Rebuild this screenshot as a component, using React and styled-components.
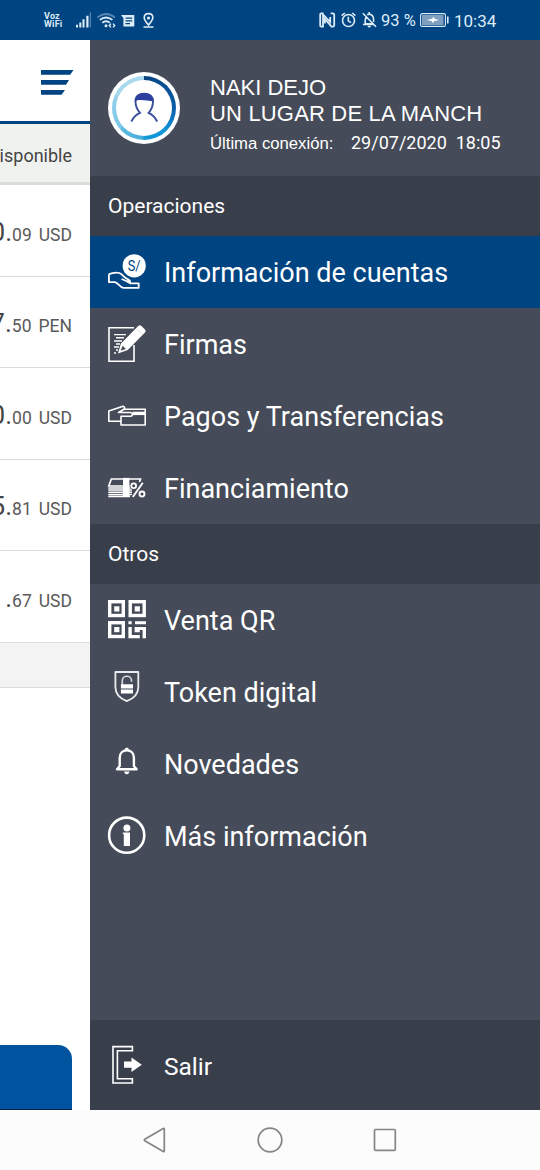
import React from "react";
import styled, { createGlobalStyle } from "styled-components";

const GlobalStyle = createGlobalStyle`
  *, *::before, *::after { box-sizing: border-box; }
  html, body { margin: 0; padding: 0; }
  body { font-family: Roboto, sans-serif; background: #fff; overflow: hidden; }
  svg { display: block; overflow: visible; flex: none; }
`;

const Screen = styled.div`
  width: 540px;
  height: 1170px;
  display: flex;
  flex-direction: column;
  overflow: hidden;
`;

const StatusBar = styled.header`
  flex: none;
  height: 40px;
  padding: 0 45px 0 44px;
  display: flex;
  align-items: center;
  justify-content: space-between;
  background: #004481;
  color: #dcecf8;
`;

const StatusGroup = styled.div`
  display: flex;
  align-items: center;
`;

const Carrier = styled.div`
  width: 32px;
  font-size: 9px;
  line-height: 8px;
  font-weight: 700;
  letter-spacing: 0.2px;
`;

const StatusText = styled.span`
  font-size: ${(p) => p.$size}px;
  line-height: 20px;
  width: ${(p) => p.$width}px;
  margin-left: ${(p) => p.$gap}px;
  white-space: nowrap;
  padding-top: 1px;
`;

const Main = styled.main`
  flex: none;
  height: 1070px;
  display: flex;
`;

const Accounts = styled.section`
  flex: none;
  width: 90px;
  overflow: hidden;
  display: flex;
  flex-direction: column;
  background: #fff;
`;

const AccountsHeader = styled.div`
  flex: none;
  height: 84px;
  padding: 30px 0 0 41px;
  border-bottom: 3px solid #004481;
`;

const ColumnTitle = styled.div`
  flex: none;
  height: 61px;
  padding: 4px 18px 0 0;
  display: flex;
  align-items: center;
  justify-content: flex-end;
  background: #f0f2f0;
  border-bottom: 3px solid #dadcdc;
  color: #444;
  font-size: 18px;
  white-space: nowrap;
`;

const Balance = styled.div`
  flex: none;
  height: 91.5px;
  padding: 3px 18px 0 0;
  display: flex;
  align-items: center;
  justify-content: flex-end;
  border-bottom: 1px solid #dcdcdc;
  color: #5a5a5a;
  font-size: 17.5px;
  white-space: nowrap;
`;

const Whole = styled.span`
  font-size: 26px;
  line-height: 30px;
  color: #444;
`;

const Amount = styled.div`
  display: flex;
  align-items: baseline;
`;

const Currency = styled.span`
  margin-left: 7px;
`;

const ListEnd = styled.div`
  flex: none;
  height: 45px;
  background: #f3f3f3;
  border-bottom: 1px solid #dadada;
`;

const ActionButton = styled.div`
  width: 72px;
  height: 65px;
  margin-top: auto;
  background: #00549f;
  border-bottom: 1px solid #072146;
  border-top-right-radius: 14px;
`;

const Drawer = styled.aside`
  flex: 1;
  display: flex;
  flex-direction: column;
  background: #454b58;
  color: #fff;
`;

const Profile = styled.div`
  flex: none;
  height: 136px;
  padding: 32px 0 0 18px;
  display: flex;
`;

const Avatar = styled.div`
  flex: none;
  width: 72px;
  height: 72px;
  border-radius: 50%;
  background: #fff;
  padding: 4px;
`;

const Ring = styled.div`
  width: 64px;
  height: 64px;
  border-radius: 50%;
  padding: 4px;
  background: conic-gradient(#07427f 0deg, #0b5ca8 85deg, #0b72bd 110deg, #1295d6 135deg, #0f98d8 178deg, #4aafdc 184deg, #5cb9e0 225deg, #7cc8e8 230deg, #8acde9 280deg, #a9d9ec 300deg, #a9d9ec 358deg);
`;

const Face = styled.div`
  width: 56px;
  height: 56px;
  border-radius: 50%;
  background: #fff;
`;

const ProfileText = styled.div`
  margin-left: 30px;
  padding-top: 3px;
  font-family: "Liberation Sans", Arial, sans-serif;
`;

const Name = styled.div`
  font-size: 22px;
  line-height: 26px;
  letter-spacing: ${(p) => p.$spacing}px;
  white-space: nowrap;
`;

const LastLogin = styled.div`
  display: flex;
  align-items: baseline;
  margin-top: 4px;
  font-size: 16.7px;
  line-height: 24px;
  white-space: nowrap;
`;

const LoginLabel = styled.span`
  width: 141px;
`;

const LoginDate = styled.span`
  font-family: Roboto, sans-serif;
  font-size: 18px;
  white-space: pre;
`;

const SectionTitle = styled.div`
  flex: none;
  height: 60px;
  padding-left: 18px;
  display: flex;
  align-items: center;
  background: #393e4b;
  font-size: 21px;
`;

const MenuItem = styled.div`
  flex: none;
  height: 72px;
  padding-left: 18px;
  display: flex;
  align-items: center;
  background: ${(p) => (p.$active ? "#004481" : "transparent")};
`;

const MenuLabel = styled.span`
  margin-left: 18px;
  padding-top: 2px;
  font-size: ${(p) => p.$size || 27}px;
  white-space: nowrap;
`;

const Logout = styled.div`
  flex: none;
  height: 90px;
  margin-top: auto;
  padding: 1px 0 0 18px;
  display: flex;
  align-items: center;
  background: #393e4b;
`;

const NavBar = styled.nav`
  flex: none;
  height: 60px;
  padding: 0 143px;
  display: flex;
  align-items: center;
  justify-content: space-between;
  background: #fcfcfc;
`;

const Icon = ({ children }) => (
  <svg width="38" height="38" viewBox="0 0 38 38" fill="none" stroke="#fff" strokeWidth="1.5">
    {children}
  </svg>
);

const AccountsIcon = () => (
  <Icon>
    <circle cx="26.2" cy="12.8" r="11.6" fill="#fff" stroke="none" />
    <text transform="translate(26.2 18) scale(.85 1)" textAnchor="middle" fill="#004481" stroke="none" fontSize="15" fontFamily="Roboto, sans-serif">S/</text>
    <path d="M.9 21.2 C4 20 8.5 19.3 11.3 20 C14.6 21 15.4 24 18 25.2 C20.4 26.2 22 26.8 22.2 28.6 L17.6 27.8 L13.6 26 M17.6 27.8 L22.6 30.4 H30.7 V34.8 H15.4 C11.8 34.4 10 29.4 6.7 29.1 H.9 V21.2" strokeWidth="1.8" strokeLinejoin="round" />
  </Icon>
);

const SignIcon = () => (
  <Icon>
    <path d="M26 2.8 H1 V36.2 H26 V20" strokeWidth="1.6" />
    <path d="M6 9.6 H18 M8 12.7 H16 M6 16 H14 M8 19 H12 M6 22 H11 M8 25 H10 M6 28 H8" strokeWidth="1.4" />
    <path d="M10 28.5 L12.8 18.8 L30.2 1 Q31.9 -.6 33.4 1 L37 4.6 Q38.4 6.2 37 7.6 L19.8 25 Z" fill="#fff" stroke="none" />
    <path d="M14.7 20.7 L17.9 24 L12.6 25.8 Z" fill="#454b58" stroke="none" />
    <path d="M28.6 3.8 L34.2 9.6" stroke="#c4c8cf" strokeWidth=".5" />
  </Icon>
);

const PaymentsIcon = () => (
  <Icon>
    <path d="M16.6 12.3 H37.2 V28 H13 V19.2 H22.5 Q24.6 19 24.4 17.2 Q24.2 15.6 22.5 15.5 H10.5 L16 12.3 Q17.6 10 15 9.2 L.8 14 V24.3 H13" strokeWidth="1.6" strokeLinejoin="round" />
    <path d="M24.4 16.4 H37.2" strokeWidth="3.4" />
  </Icon>
);

const FinanceIcon = () => (
  <Icon>
    <path d="M15 10 H3.3 L.8 17 H24 M21 10 H32.5 L31.5 13" strokeWidth="1.7" />
    <path d="M.3 18.9 H24 M.3 21.1 H24 M.3 23.3 H24 M.3 25.4 H24 M.3 27.4 H22" strokeWidth="1.5" />
    <path d="M15 8.9 H21.4 V28 H15 Z" fill="#fff" stroke="none" />
    <path d="M34.8 13.7 L24.8 28" stroke="#454b58" strokeWidth="4" />
    <circle cx="25.7" cy="16.7" r="2.3" fill="#454b58" stroke="#454b58" strokeWidth="3.4" />
    <circle cx="25.7" cy="16.7" r="2.4" strokeWidth="1.8" />
    <circle cx="34" cy="25" r="2.5" strokeWidth="1.9" />
    <path d="M34.8 13.7 L24.8 28" strokeWidth="1.9" />
  </Icon>
);

const QrIcon = () => (
  <Icon>
    <g strokeWidth="3.4">
      <rect x="1.7" y=".7" width="13.6" height="13.8" />
      <rect x="22.2" y=".7" width="14" height="13.8" />
      <rect x="1.7" y="21.7" width="13.6" height="13.8" />
    </g>
    <g fill="#fff" stroke="none">
      <rect x="6.2" y="5.3" width="5.2" height="5.2" />
      <rect x="26.7" y="5.3" width="5.2" height="5.2" />
      <rect x="6.2" y="26" width="5.2" height="5.2" />
      <rect x="20.4" y="20.2" width="3.3" height="3" />
      <path d="M27 20.2 H38 V23.3 H27 Z M26.6 26 H31.8 V31.2 H26.6 Z M20.4 26 H23.8 V34 H31.8 V37.2 H20.4 Z M30.2 26 H38 V37.2 H34.6 V29 H30.2 Z" />
    </g>
  </Icon>
);

const TokenIcon = () => (
  <Icon>
    <path d="M7.4 -1 H30.3 V14 C30.3 22 25 25.8 18.8 28.2 C12.6 25.8 7.4 22 7.4 14 Z" stroke="#e9ebee" strokeWidth="1.8" strokeLinejoin="round" />
    <path d="M14.3 11.8 V7.5 C14.3 1.8 23.5 1.8 23.5 7.5 V8.8" stroke="#d5d8dd" strokeWidth="1.7" />
    <path d="M12.9 11.2 H25 V15.4 H12.9 Z M12.9 16.4 H25 V20.6 H12.9 Z" fill="#fff" stroke="none" />
  </Icon>
);

const BellIcon = () => (
  <Icon>
    <path d="M9 24.2 H28.6 L25.9 21 V12.8 C25.9 8.4 23.3 5.4 18.8 5.4 C14.3 5.4 11.7 8.4 11.7 12.8 V21 Z" strokeWidth="2.4" strokeLinejoin="round" />
    <path d="M16.6 5 Q16.8 2.5 18.8 2.5 Q20.8 2.5 21 5 Z M16 26.6 H21.6 Q20.8 29.3 18.8 29.3 Q16.7 29.3 16 26.6 Z" fill="#fff" stroke="none" />
  </Icon>
);

const InfoIcon = () => (
  <Icon>
    <circle cx="18.7" cy="18.2" r="17.6" strokeWidth="2.6" />
    <circle cx="18.9" cy="11" r="3.5" fill="#fff" stroke="none" />
    <path d="M14.8 15.6 H22 V29 H15.8 V17.2 L14.8 16.8 Z" fill="#fff" stroke="none" />
  </Icon>
);

const ExitIcon = () => (
  <Icon>
    <path d="M24.4 -.4 H5 V36 H24.4 V31.8 H9.4 V3.8 H24.4 Z" strokeWidth="1.6" />
    <path d="M16 14.6 H23.5 V10.6 L33.8 17.8 L23.5 25 V20.8 H16 Z" fill="#fff" stroke="none" />
  </Icon>
);

const PersonIcon = () => (
  <svg width="56" height="56" viewBox="0 0 56 56" fill="none">
    <path d="M15.3 41.5 C17 38 19.5 34.8 24 32.8 C21 29.5 19.5 25.5 19.5 21.5 C19.5 16 23 13.7 28 13.7 C33 13.7 37 16 37 21.5 C37 25.5 35.5 29.5 32.6 32.8 C37 34.8 39.5 38 41.2 41.5" stroke="#3a4f9e" strokeWidth="1.9" />
    <path d="M18.8 21.2 C18.8 10.6 37.6 10.6 37.6 21.2 C33 21.5 24.5 18.6 18.8 21.2 Z" fill="#2d3f9f" />
  </svg>
);

const MenuGlyph = () => (
  <svg width="33" height="26" viewBox="0 0 33 26" fill="#004481">
    <path d="M0 0 H32.5 L29.2 4.8 H0 Z M0 10 H28 L25 14.8 H0 Z M0 20 H24 L20.5 24.8 H0 Z" />
  </svg>
);

const LeftStatusIcons = () => (
  <svg width="79" height="20" viewBox="76 10 79 20" fill="#dcecf8">
    <path d="M76 24.8 h2 v2.6 h-2 Z M79.3 22.4 h2 v5 h-2 Z M82.5 19.2 h2 v8.2 h-2 Z M86.3 15.8 h2.2 v11.6 h-2.2 Z" />
    <path d="M89.7 12.3 h1.4 v15.1 h-1.4 Z" opacity=".35" />
    <g fill="none" stroke="#dcecf8" strokeWidth="1.8">
      <path d="M97.4 17.5 Q106 10.4 114.8 17.5" opacity=".4" />
      <path d="M99.8 19.9 Q106 15 112.4 19.9 M102.3 22.8 Q106 19.8 109.8 22.8" />
      <path d="M111 23.6 L109.3 25.5 L111 27.4 M113 23.6 L114.7 25.5 L113 27.4" strokeWidth="1.4" />
    </g>
    <circle cx="106" cy="25.8" r="1.5" />
    <path fillRule="evenodd" d="M121 15 H134.3 V26.4 H123.4 V18 Z M125.5 17.5 V18.7 H132.2 V17.5 Z M125.5 20.2 V21.4 H132.2 V20.2 Z M125.5 23 V24.2 H130 V23 Z" />
    <g fill="none" stroke="#dcecf8" strokeWidth="1.6">
      <path d="M148.5 25 C145.8 21.8 144.2 20 144.2 17.7 C144.2 12.2 152.8 12.2 152.8 17.7 C152.8 20 151.2 21.8 148.5 25 Z M143.5 27 H153.5" />
    </g>
    <circle cx="148.5" cy="18" r="1.6" />
  </svg>
);

const RightStatusIcons = () => (
  <svg width="58" height="20" viewBox="319 10 58 20" fill="none" stroke="#dcecf8" strokeWidth="1.6">
    <path d="M323.6 13.3 H321.4 Q320.2 13.3 320.2 14.5 V25.5 Q320.2 26.7 321.4 26.7 H323 V14.5 L330.2 22 V17" strokeWidth="1.8" />
    <path d="M330.6 13.3 H332.8 Q334.2 13.3 334.2 14.5 V25.5 Q334.2 26.7 332.8 26.7 H331.5 L324.8 19 V23.5" strokeWidth="1.8" />
    <circle cx="348.5" cy="20.5" r="6" />
    <path d="M348.3 16.8 V20.8 L351 22.6 M341.6 15.7 L344.8 13 M355.4 15.7 L352.2 13" />
    <path d="M362.8 13.3 L376 26.8 M366 17 Q365 19 365.2 23.8 H372.5 M363 24.5 H373.5 M367.2 14.8 Q369 13.5 371.2 14.8 Q374 16.2 373.6 22 M369.2 12 V14" />
    <path d="M367.5 25.7 H371 Q370.7 27.6 369.2 27.6 Q367.8 27.6 367.5 25.7 Z" fill="#dcecf8" stroke="none" />
  </svg>
);

const Battery = () => (
  <svg width="29" height="14" viewBox="0 0 29 14" fill="none">
    <rect x=".6" y=".6" width="24.8" height="12.8" rx="1.5" stroke="#dcecf8" strokeWidth="1.1" />
    <rect x="2" y="2" width="21.5" height="10" fill="#7f9fc1" />
    <path d="M6.5 7 L12.5 5.8 L13 3.5 L15 6 L19 7 L14 8.3 L13 10.3 L11.5 8 Z" fill="#fff" />
    <rect x="27" y="3.5" width="1.6" height="7" fill="#dcecf8" />
  </svg>
);

const balances = [
  ["0", "09", "USD"],
  ["7", "50", "PEN"],
  ["0", "00", "USD"],
  ["5", "81", "USD"],
  ["", "67", "USD"],
];

const operations = [
  { label: "Información de cuentas", icon: AccountsIcon, active: true },
  { label: "Firmas", icon: SignIcon },
  { label: "Pagos y Transferencias", icon: PaymentsIcon },
  { label: "Financiamiento", icon: FinanceIcon },
];

const others = [
  { label: "Venta QR", icon: QrIcon },
  { label: "Token digital", icon: TokenIcon },
  { label: "Novedades", icon: BellIcon },
  { label: "Más información", icon: InfoIcon },
];

const Menu = ({ items }) =>
  items.map(({ label, icon: Glyph, active }) => (
    <MenuItem key={label} $active={active}>
      <Glyph />
      <MenuLabel>{label}</MenuLabel>
    </MenuItem>
  ));

export default function App() {
  return (
    <Screen>
      <GlobalStyle />
      <StatusBar>
        <StatusGroup>
          <Carrier>Voz<br />WiFi</Carrier>
          <LeftStatusIcons />
        </StatusGroup>
        <StatusGroup>
          <RightStatusIcons />
          <StatusText $size={16.5} $width={39} $gap={4}>93 %</StatusText>
          <Battery />
          <StatusText $size={17} $width={41} $gap={5}>10:34</StatusText>
        </StatusGroup>
      </StatusBar>
      <Main>
        <Accounts>
          <AccountsHeader><MenuGlyph /></AccountsHeader>
          <ColumnTitle>Disponible</ColumnTitle>
          {balances.map(([whole, cents, currency], i) => (
            <Balance key={i}>
              <Amount>
                <Whole>{whole}.</Whole>
                <span>{cents}</span>
                <Currency>{currency}</Currency>
              </Amount>
            </Balance>
          ))}
          <ListEnd />
          <ActionButton />
        </Accounts>
        <Drawer>
          <Profile>
            <Avatar><Ring><Face><PersonIcon /></Face></Ring></Avatar>
            <ProfileText>
              <Name $spacing={0}>NAKI DEJO</Name>
              <Name $spacing={0.17}>UN LUGAR DE LA MANCH</Name>
              <LastLogin>
                <LoginLabel>Última conexión:</LoginLabel>
                <LoginDate>{"29/07/2020  18:05"}</LoginDate>
              </LastLogin>
            </ProfileText>
          </Profile>
          <SectionTitle>Operaciones</SectionTitle>
          <Menu items={operations} />
          <SectionTitle>Otros</SectionTitle>
          <Menu items={others} />
          <Logout>
            <ExitIcon />
            <MenuLabel $size={24.5}>Salir</MenuLabel>
          </Logout>
        </Drawer>
      </Main>
      <NavBar>
        <svg width="23" height="26" viewBox="0 0 23 26" fill="none" stroke="#858585" strokeWidth="1.7">
          <path d="M21.3 2.2 V23.8 Q21.3 25 20.2 24.4 L1.8 13.7 Q.8 13 1.8 12.3 L20.2 1.6 Q21.3 1 21.3 2.2 Z" />
        </svg>
        <svg width="26" height="26" viewBox="0 0 26 26" fill="none" stroke="#858585" strokeWidth="1.7">
          <circle cx="13" cy="13" r="11.8" />
        </svg>
        <svg width="24" height="24" viewBox="0 0 24 24" fill="none" stroke="#858585" strokeWidth="1.7">
          <rect x="1.5" y="1.5" width="20.8" height="20.8" rx="1" />
        </svg>
      </NavBar>
    </Screen>
  );
}
